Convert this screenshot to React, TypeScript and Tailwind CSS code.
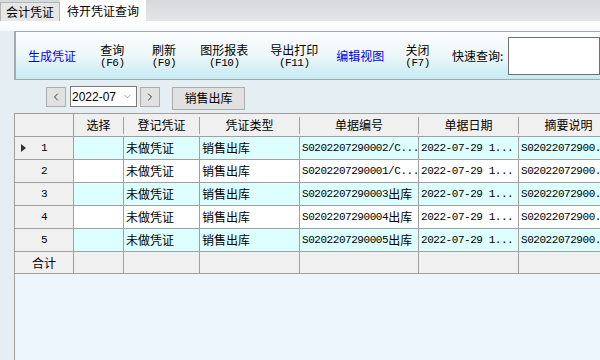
import { ChevronDown, ChevronLeft, ChevronRight } from 'lucide-react';

type Row = {
  no: string;
  status: string;
  type: string;
  bill: string;
  billCjk?: string;
  date: string;
  memo: string;
};

const rows: Row[] = [
  { no: '1', status: '未做凭证', type: '销售出库', bill: 'S0202207290002/C...', date: '2022-07-29 1...', memo: 'S02022072900.' },
  { no: '2', status: '未做凭证', type: '销售出库', bill: 'S0202207290001/C...', date: '2022-07-29 1...', memo: 'S02022072900.' },
  { no: '3', status: '未做凭证', type: '销售出库', bill: 'S0202207290003', billCjk: '出库', date: '2022-07-29 1...', memo: 'S02022072900.' },
  { no: '4', status: '未做凭证', type: '销售出库', bill: 'S0202207290004', billCjk: '出库', date: '2022-07-29 1...', memo: 'S02022072900.' },
  { no: '5', status: '未做凭证', type: '销售出库', bill: 'S0202207290005', billCjk: '出库', date: '2022-07-29 1...', memo: 'S02022072900.' },
];

const cjk = "font-['Noto_Sans_CJK_SC',sans-serif]";
const mono = "font-['Liberation_Mono',monospace] text-[11px] tracking-[-0.45px]";
const cols = 'grid grid-cols-[59px_50px_76px_100px_119px_100px_100px]';

function ToolButton({ label, keyName }: { label: string; keyName: string }) {
  return (
    <div className="flex flex-col items-center">
      <span className="block h-[14px] text-[12px] leading-[14px]">{label}</span>
      <span className={`block h-[12px] leading-[12px] ${mono}`}>({keyName})</span>
    </div>
  );
}

function HeaderCell({ children }: { children?: React.ReactNode }) {
  return (
    <div className="flex h-[23px] items-center border-b border-[#a0a0a0] bg-[#f0f0f0]">
      <span className="flex-1 text-center text-[12px]">{children}</span>
      <span className="h-[17px] w-px bg-[#a0a0a0]" />
    </div>
  );
}

export default function App() {
  return (
    <div className={`flex h-[360px] w-[600px] flex-col overflow-hidden bg-[#e4eef3] text-black ${cjk}`}>
      {/* Tabs */}
      <div className="flex h-[21px] items-end bg-gradient-to-b from-[#d6d9dc] to-[#e3e5e7]">
        <div className="flex h-[19px] w-[60px] items-center justify-center border border-b-0 border-[#b4b4b4] bg-[#e6e6e6] text-[12px]">
          会计凭证
        </div>
        <div className="flex h-[21px] w-[86px] items-center justify-center bg-white text-[12px]">
          待开凭证查询
        </div>
      </div>

      <div className="h-[10px] bg-gradient-to-b from-white to-[#f6f9fb]" />

      {/* Toolbar */}
      <div className="ml-[14px] flex h-[49px] items-center border-y border-l-2 border-[#a4a9ad] bg-gradient-to-b from-[#fcfeff] via-[#eef7f9] to-[#c4eaf4]">
        <span className="ml-[12px] text-[12px] text-[#0000ff]">生成凭证</span>
        <div className="ml-[24px]"><ToolButton label="查询" keyName="F6" /></div>
        <div className="ml-[27px]"><ToolButton label="刷新" keyName="F9" /></div>
        <div className="ml-[24px]"><ToolButton label="图形报表" keyName="F10" /></div>
        <div className="ml-[22px]"><ToolButton label="导出打印" keyName="F11" /></div>
        <span className="ml-[18px] text-[12px] text-[#0000ff]">编辑视图</span>
        <div className="ml-[21px]"><ToolButton label="关闭" keyName="F7" /></div>
        <span className="ml-[22px] text-[12px]">快速查询:</span>
        <div className="ml-[5px] h-[38px] flex-1 border border-[#707070] bg-white" />
      </div>

      {/* Date row */}
      <div className="flex h-[33px] items-center pl-[46px]">
        <button className="flex h-[20px] w-[20px] items-center justify-center border border-[#adadad] bg-[#e1e1e1]">
          <ChevronLeft size={12} strokeWidth={1.5} />
        </button>
        <div className="ml-[4px] flex h-[21px] w-[67px] items-center justify-between border border-[#7a7a7a] bg-white pl-[1px] pr-[3px]">
          <span className="font-['Liberation_Sans',sans-serif] text-[12px]">2022-07</span>
          <ChevronDown size={11} strokeWidth={1.5} className="text-[#777]" />
        </div>
        <button className="ml-[3px] flex h-[20px] w-[20px] items-center justify-center border border-[#adadad] bg-[#e1e1e1]">
          <ChevronRight size={12} strokeWidth={1.5} />
        </button>
        <button className="ml-[12px] mt-[3px] flex h-[23px] w-[73px] items-center justify-center border border-[#adadad] bg-[#e1e1e1] text-[12px]">
          销售出库
        </button>
      </div>

      {/* Grid */}
      <div className="ml-[14px] flex-1 border-l border-t border-[#a0a0a0] bg-[#eef6fd]">
        <div className={cols}>
          <div className="h-[23px] border-b border-r border-[#a0a0a0] bg-[#f0f0f0]" />
          <HeaderCell>选择</HeaderCell>
          <HeaderCell>登记凭证</HeaderCell>
          <HeaderCell>凭证类型</HeaderCell>
          <HeaderCell>单据编号</HeaderCell>
          <HeaderCell>单据日期</HeaderCell>
          <HeaderCell>摘要说明</HeaderCell>
        </div>
        {rows.map((r, i) => {
          const bg = i % 2 === 0 ? 'bg-[#ddffff]' : 'bg-white';
          const cell = `flex h-[23px] items-center border-b border-r border-[#a0a0a0] pl-[2px] whitespace-nowrap overflow-hidden ${bg}`;
          return (
            <div key={r.no} className={cols}>
              <div className="relative flex h-[23px] items-center justify-center border-b border-r border-[#a0a0a0] bg-[#f0f0f0]">
                {i === 0 && (
                  <span className="absolute left-[6px] top-[7px] h-0 w-0 border-y-[4px] border-l-[5px] border-y-transparent border-l-[#333]" />
                )}
                <span className={mono}>{r.no}</span>
              </div>
              <div className={cell} />
              <div className={`${cell} text-[12px]`}>{r.status}</div>
              <div className={`${cell} text-[12px]`}>{r.type}</div>
              <div className={cell}>
                <span className={mono}>{r.bill}</span>
                {r.billCjk && <span className="text-[12px]">{r.billCjk}</span>}
              </div>
              <div className={cell}>
                <span className={mono}>{r.date}</span>
              </div>
              <div className={cell}>
                <span className={mono}>{r.memo}</span>
              </div>
            </div>
          );
        })}
        <div className={cols}>
          <div className="flex h-[22px] items-center justify-center border-b border-r border-[#a0a0a0] bg-[#f0f0f0] text-[12px]">合计</div>
          <div className="h-[22px] border-b border-r border-[#a0a0a0] bg-[#f0f0f0]" />
          <div className="h-[22px] border-b border-r border-[#a0a0a0] bg-[#f0f0f0]" />
          <div className="h-[22px] border-b border-r border-[#a0a0a0] bg-[#f0f0f0]" />
          <div className="h-[22px] border-b border-r border-[#a0a0a0] bg-[#f0f0f0]" />
          <div className="h-[22px] border-b border-r border-[#a0a0a0] bg-[#f0f0f0]" />
          <div className="h-[22px] border-b border-r border-[#a0a0a0] bg-[#f0f0f0]" />
        </div>
      </div>
    </div>
  );
}
